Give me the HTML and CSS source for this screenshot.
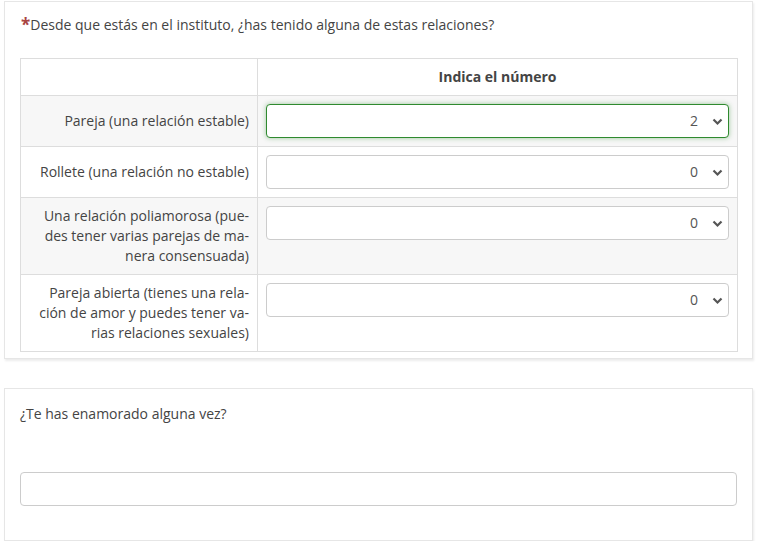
FILE: index.html
```html
<!DOCTYPE html>
<html lang="es">
<head>
<meta charset="utf-8">
<title>Encuesta</title>
<link rel="stylesheet" href="styles.css">
</head>
<body>
<div class="page">
  <section class="card">
    <div class="question"><span class="req">*</span>Desde que estás en el instituto, ¿has tenido alguna de estas relaciones?</div>
    <table class="grid">
      <colgroup><col class="c-label"><col class="c-answer"></colgroup>
      <thead>
        <tr><th></th><th class="head">Indica el número</th></tr>
      </thead>
      <tbody>
        <tr class="odd">
          <td class="label">Pareja (una relación estable)</td>
          <td class="answer"><div class="sel focus"><span class="val">2</span><svg class="chev" width="11" height="8" viewBox="0 0 11 8"><path d="M1.5 1.5 L5.5 5.5 L9.5 1.5" fill="none" stroke="#555" stroke-width="2.2"/></svg></div></td>
        </tr>
        <tr>
          <td class="label">Rollete (una relación no estable)</td>
          <td class="answer"><div class="sel"><span class="val">0</span><svg class="chev" width="11" height="8" viewBox="0 0 11 8"><path d="M1.5 1.5 L5.5 5.5 L9.5 1.5" fill="none" stroke="#555" stroke-width="2.2"/></svg></div></td>
        </tr>
        <tr class="odd">
          <td class="label">Una relación poliamorosa (pue-<br>des tener varias parejas de ma-<br>nera consensuada)</td>
          <td class="answer"><div class="sel"><span class="val">0</span><svg class="chev" width="11" height="8" viewBox="0 0 11 8"><path d="M1.5 1.5 L5.5 5.5 L9.5 1.5" fill="none" stroke="#555" stroke-width="2.2"/></svg></div></td>
        </tr>
        <tr>
          <td class="label">Pareja abierta (tienes una rela-<br>ción de amor y puedes tener va-<br>rias relaciones sexuales)</td>
          <td class="answer"><div class="sel"><span class="val">0</span><svg class="chev" width="11" height="8" viewBox="0 0 11 8"><path d="M1.5 1.5 L5.5 5.5 L9.5 1.5" fill="none" stroke="#555" stroke-width="2.2"/></svg></div></td>
        </tr>
      </tbody>
    </table>
  </section>

  <section class="card card-two">
    <div class="question plain">¿Te has enamorado alguna vez?</div>
    <div class="textbox"></div>
  </section>
</div>
</body>
</html>
```

FILE: styles.css
```css
* { box-sizing: border-box; }

html, body {
  margin: 0;
  padding: 0;
  background: #fff;
}

body {
  font-family: "Open Sans", "Noto Sans", sans-serif;
  font-size: 14px;
  line-height: 20px;
  color: #444;
}

.page {
  padding: 1px 12px 0 4px;
  display: flex;
  flex-direction: column;
  gap: 29px;
}

.card {
  border: 1px solid #e6e6e6;
  box-shadow: 1px 2px 2px rgba(0, 0, 0, 0.08);
  background: #fff;
  padding: 12px 15px 6px 15px;
}

.question {
  padding-left: 1px;
  min-height: 44px;
}

.req {
  color: #a94442;
  font-size: 17px;
  font-weight: bold;
  position: relative;
  top: 1px;
}

.grid {
  width: 717px;
  border-collapse: collapse;
  table-layout: fixed;
}

.c-label { width: 237px; }
.c-answer { width: 480px; }

.grid th,
.grid td {
  border: 1px solid #ddd;
  padding: 8px;
  vertical-align: top;
}

.grid th.head {
  font-weight: bold;
  text-align: center;
  color: #444;
}

.grid tr.odd td { background: #f7f7f7; }

.grid td.label {
  text-align: right;
  padding-right: 8px;
  vertical-align: middle;
}

.answer {
  padding: 7px 8px 8px 8px;
}

.sel {
  position: relative;
  height: 34px;
  border: 1px solid #ccc;
  border-radius: 4px;
  background: #fff;
  display: flex;
  align-items: center;
  justify-content: flex-end;
  padding-right: 30px;
  color: #555;
}

.sel.focus {
  border-color: #2f8a2f;
  box-shadow: 0 0 5px rgba(47, 138, 47, 0.45);
}

.chev {
  position: absolute;
  right: 5px;
  top: 13px;
}

.card-two {
  padding: 15px 15px 34px 15px;
}

.question.plain {
  padding-left: 0;
  min-height: 68px;
}

.textbox {
  height: 34px;
  border: 1px solid #ccc;
  border-radius: 4px;
  background: #fff;
}
```
